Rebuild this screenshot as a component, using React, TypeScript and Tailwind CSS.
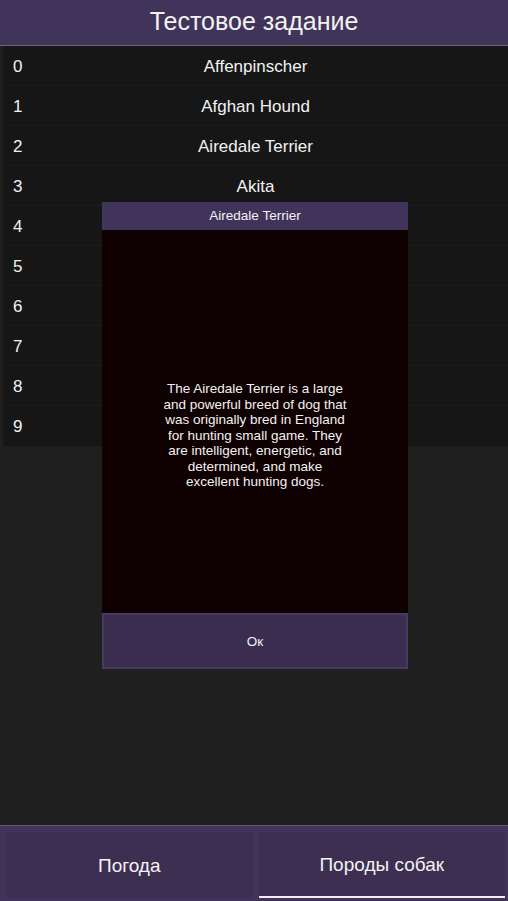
import React, { useState } from 'react';

const breeds = [
    'Affenpinscher',
    'Afghan Hound',
    'Airedale Terrier',
    'Akita',
    'Alaskan Malamute',
    'American Bulldog',
    'American Eskimo Dog',
    'Australian Cattle Dog',
    'Australian Shepherd',
    'Basenji',
];

const description =
    'The Airedale Terrier is a large and powerful breed of dog that was originally bred in England for hunting small game. They are intelligent, energetic, and determined, and make excellent hunting dogs.';

export default function App() {
    const [tab, setTab] = useState<'weather' | 'dogs'>('dogs');
    const [open, setOpen] = useState(true);

    return (
        <div className="h-[901px] w-full flex flex-col bg-[#1f1f1f] text-[#f2f2f2] font-['Liberation_Sans',Arial,sans-serif] overflow-hidden">
            {/* Header */}
            <div className="h-[46px] shrink-0 bg-[#41345a] border-b border-[#6b6b6b] flex items-center justify-center">
                <h1 className="text-[25px] leading-none pb-[2px]">Тестовое задание</h1>
            </div>

            {/* Breed list */}
            <div className="flex-1 relative">
                <ul className="ml-[3px] bg-[#161616]">
                    {breeds.map((name, i) => (
                        <li
                            key={name}
                            className="h-[40px] flex items-center border-b border-[#1c1c1c] last:border-b-0 relative pt-[2px]"
                        >
                            <span className="absolute left-[10px] text-[17px]">{i}</span>
                            <span className="w-full text-center text-[17px]">{name}</span>
                        </li>
                    ))}
                </ul>

                {/* Breed dialog */}
                {open && (
                    <div className="absolute left-[102px] top-[156px] w-[306px] flex flex-col">
                        <div className="h-[28px] bg-[#41345a] flex items-center justify-center text-[13.5px]">
                            Airedale Terrier
                        </div>
                        <div className="h-[383px] bg-[#0f0002] flex items-center justify-center pt-[28px]">
                            <p className="w-[186px] text-[13.5px] leading-[15.5px] text-center">{description}</p>
                        </div>
                        <button
                            onClick={() => setOpen(false)}
                            className="h-[56px] bg-[#3a2d4f] border-2 border-[#463a5e] text-[13.5px] text-[#f2f2f2] pt-[3px]"
                        >
                            Ок
                        </button>
                    </div>
                )}
            </div>

            {/* Bottom tabs */}
            <div className="h-[76px] shrink-0 bg-[#41345a] border-t border-[#5e5e5e] flex gap-[6px] pl-[6px] pr-[3px] pt-[6px] pb-[3px]">
                <button
                    onClick={() => setTab('weather')}
                    className={`flex-1 bg-[#3c2f52] text-[19px] text-[#f2f2f2] pt-[3px] ${tab === 'weather' ? 'border-b-2 border-[#f0f0f0]' : ''}`}
                >
                    Погода
                </button>
                <button
                    onClick={() => setTab('dogs')}
                    className={`flex-1 bg-[#3c2f52] text-[19px] text-[#f2f2f2] pt-[3px] ${tab === 'dogs' ? 'border-b-2 border-[#f0f0f0]' : ''}`}
                >
                    Породы собак
                </button>
            </div>
        </div>
    );
}
